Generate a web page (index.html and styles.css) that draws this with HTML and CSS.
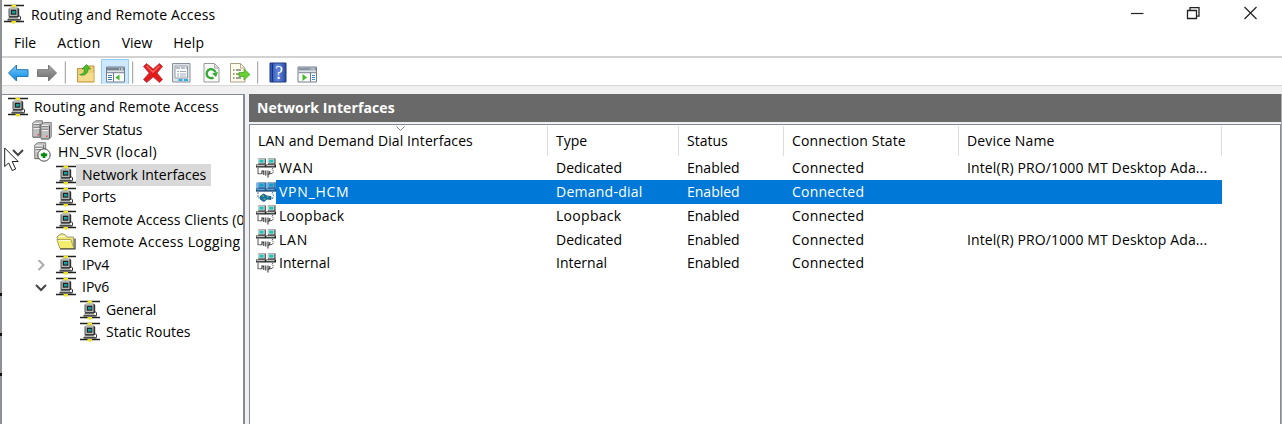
FILE: index.html
```html
<!DOCTYPE html>
<html lang="en">
<head>
<meta charset="utf-8">
<title>Routing and Remote Access</title>
<link rel="stylesheet" href="styles.css">
</head>
<body>
<svg class="defs" aria-hidden="true">
  <symbol id="router" viewBox="0 0 20 20">
    <path d="M0 1.500h20M0 17.500h20" stroke="#222" stroke-width="1.700"/>
    <path d="M7.500.8h4.500v1.600h-1.200v1.400H8.600V2.400H7.500zM7.500 17h4.500v1.500h-1.200v1.300H8.600v-1.300H7.500z" fill="#f1e811"/>
    <path d="M6 3.800h8l1.200 1.200v8H6z" fill="#333"/>
    <path d="M5 4.500l1-.8h7.500v9H5z" fill="#b5b9b7"/>
    <path d="M5 12.500V4.500" stroke="#555" stroke-width="1"/>
    <path d="M6.800 5.700h5.500v5H6.800z" fill="#222"/>
    <path d="M8 7h3.500v2.500H8z" fill="#12a09e"/>
    <path d="M4.500 13h9l2 2.500H3.500z" fill="#b2b5b3"/>
    <path d="M5 12.800h9M3.500 15.800h13" stroke="#222" stroke-width="1.200"/>
    <path d="M15.300 11.500l1.200 1.500v2.500" fill="none" stroke="#333"/>
  </symbol>
  <symbol id="servers" viewBox="0 0 20 20">
    <path d="M.7 3L4 .7h6.500v14l-2 2.500H.7z" fill="#c0c0c0" stroke="#707070" stroke-width=".8"/>
    <path d="M9 4.500l3-2h7.300v14l-2 2.500H9z" fill="#c0c0c0" stroke="#707070" stroke-width=".8"/>
    <path d="M8 4v12.500M17.500 5.500V18" stroke="#555" stroke-width="1.100"/>
    <path d="M1.500 3.500h6M1.500 6h6M1.500 8.500h6M9.800 5.500h6.500M9.800 8h6.500M9.800 10.500h6.500" stroke="#eee" stroke-width="1.200"/>
    <path d="M1.500 4.700h6M1.500 7.200h6M9.800 6.700h6.500M9.800 9.200h6.500M1 17.300h7.500M9.300 19h8" stroke="#666" stroke-width=".8"/>
    <path d="M5.500 14h1.500v1.500H5.500zM14 15.500h1.500V17H14z" fill="#e44"/>
  </symbol>
  <symbol id="server-up" viewBox="0 0 20 20">
    <path d="M2.700 3l3-2.300h8v13l-2 3h-9z" fill="#c6c6c6" stroke="#666" stroke-width=".8"/>
    <path d="M3.500 4h7M3.500 6.500h7M3.500 9h6" stroke="#fff"/><path d="M3.500 5.200h7M3.500 7.700h7M11.500 3v6M3 16.500h5" stroke="#666" stroke-width=".8"/>
    <circle cx="12" cy="13" r="6.200" fill="#fff" stroke="#333" stroke-width=".9"/>
    <path d="M12 10l1.400 1.600h1.800v2.600h-1.800V16h-2.800v-1.800H8.800v-2.600h1.800z" fill="#078a0d"/>
  </symbol>
  <symbol id="folder" viewBox="0 0 20 20">
    <path d="M1 5l2-2 3-1.500L9.500 3 11 5h6.500v11H4z" fill="#efe67e" stroke="#888560" stroke-width=".8"/>
    <path d="M.8 7.500h14L18 16.500H4z" fill="#f5ed70" stroke="#9d9747" stroke-width=".8"/>
    <path d="M4 17h15V6.500" fill="none" stroke="#333" stroke-width="1.200"/>
    <path d="M3 4.500h6M3 8.500h11" stroke="#fffde0"/>
  </symbol>
  <symbol id="pcs" viewBox="0 0 20 20">
    <path d="M2.300.5h7.500v6H2.300zM12 .5h7.500v6H12z" fill="#333"/>
    <path d="M1.800.5h7v5h-7zM11.500.5h7v5h-7z" fill="#c9cecc"/>
    <path d="M3.500 1.800h4v2.700h-4zM13.200 1.800h4v2.700h-4z" fill="#12c9be"/>
    <path d="M0 6.500h20v3H0z" fill="#222"/>
    <path d="M.5 7h8.300v1.200H.5zM10.300 7h8.300v1.200h-8.300z" fill="#bfc2c1"/>
  </symbol>
  <symbol id="network" viewBox="0 0 20 20">
    <use href="#pcs"/>
    <path d="M2 10v5.800h4" fill="none" stroke="#666" stroke-width="1.100"/>
    <path d="M17 10l-1 1.500 1.500 1.500-1 2.500H13.500" fill="none" stroke="#555" stroke-dasharray="1.600 .8"/>
    <path d="M6 16v-3h1.800v4M9.800 17.500v-5M12 12.500v7M12 16h1.800v-3" fill="none" stroke="#333" stroke-width="1.100"/>
  </symbol>
  <symbol id="dial" viewBox="0 0 20 20">
    <use href="#pcs"/>
    <path d="M0 .5h20v9H0z" fill="#0878d9" opacity=".5"/>
    <path d="M2 10v5.800h3M17 10l-1 1.500 1.500 1.500-1 4" fill="none" stroke="#437da9" stroke-dasharray="2 1"/>
    <path d="M4.500 14l3-2 3.500 2 4 .5v3l-4-.5-3 2.500-3.500-2z" fill="#0876a8" stroke="#164f79" stroke-width=".8"/>
    <path d="M6 14h2M7.500 17h2M11 15h1.500" stroke="#b2c252" stroke-width="1.200"/>
  </symbol>
</svg>
<div class="window">
  <header class="titlebar">
    <svg class="icon"><use href="#router"/></svg><span class="title">Routing and Remote Access</span>
    <svg class="controls" viewBox="0 0 130 20" fill="none" stroke="#222">
      <path d="M1 9.500h12.500" stroke-width="1.200"/>
      <path d="M57.500 6.500h9v8h-9zM60 6V3.700h9v8.500h-2.500" stroke-width="1.300"/>
      <path d="M114.500 3l12 12M126.500 3l-12 12" stroke-width="1.200"/>
    </svg>
  </header>
  <nav class="menu"><span>File</span><span class="action">Action</span><span>View</span><span class="help">Help</span></nav>
  <div class="toolbar">
    <svg viewBox="0 0 330 26" width="330" height="26">
      <defs>
        <linearGradient id="blue" x2="0" y2="1"><stop stop-color="#79c9fa"/><stop offset="1" stop-color="#078ae5"/></linearGradient>
        <linearGradient id="gray" x2="0" y2="1"><stop stop-color="#aaa"/><stop offset="1" stop-color="#6b6b6b"/></linearGradient>
        <linearGradient id="help" x2="1"><stop stop-color="#284fae"/><stop offset=".5" stop-color="#6385dc"/><stop offset="1" stop-color="#2749a2"/></linearGradient>
      </defs>
      <path d="M6.500 15l8-8v4.700H26v6.800H14.500V23z" fill="url(#blue)" stroke="#2478b3"/>
      <path d="M54.500 15l-8-8v4.700H35.500v6.800h11V23z" fill="url(#gray)" stroke="#777"/>
      <path d="M63.300 3.500v22M130.700 3.500v22M255.700 3.500v22" stroke="#999"/>
      <path d="M75.500 10.500h6l2-2.500H92v16H75.500z" fill="#edcf75" stroke="#bd9545"/><path d="M76.500 15h15v8h-15z" fill="#f5dc8d"/>
      <path d="M77.500 16.500c4 0 5-2.500 5-5.500h-2.500l4.500-4.500 4 4.500h-2.500c0 5-4 7.500-8.500 5.500z" fill="#4bbf25" stroke="#2e8c22" stroke-width=".7"/>
      <path d="M99.500 1.500h27v25h-27z" fill="#cce8ff" stroke="#91cdf7"/>
      <g transform="translate(104 8.500)"><path d="M.5.500h18v15H.5z" fill="#fafafa" stroke="#747f8c"/><path d="M1 1h17v3H1z" fill="#748394"/><path d="M1 6h17" stroke="#8d98a4" stroke-width="1.500"/><path d="M2 9h4M2 11h4M2 13h4" stroke="#3e75a2"/><path d="M7.500 6v9" stroke="#69798a"/><path d="M13.500 8v6L9.500 11z" fill="#43b927"/><path d="M13 2.500h1M15 2.500h2" stroke="#fff"/></g>
      <path d="M144.500 5.500l6.700 5.500 6.300-5.500 3 3-5.500 6.500 5.500 6.500-3 3-6.300-5.500-6.500 5.500-3.200-3 5.700-6.500-5.700-6.500z" fill="#e11b1b" stroke="#b9353a" stroke-width=".8"/><path d="M144.500 8l6.500 6 6.500-6" fill="none" stroke="#f86a61" stroke-width="1.300"/>
      <g transform="translate(170 5)"><path d="M.5.500h17.500v18.500H.5z" fill="#dfe3e7" stroke="#89929b"/><path d="M3 3h12.500v12H3z" fill="#fff" stroke="#8e99a4"/><path d="M4 5h11" stroke="#9ba8b6" stroke-width="1.500" stroke-dasharray="4 1"/><path d="M5 8.500h2M8 8.500h6M5 11h2M8 11h6M5 13h2M8 13h6" stroke="#9aabbb"/><path d="M6.500 17h4M12 17h4" stroke="#2daee6" stroke-width="2"/></g>
      <path d="M202 5.500h10.500L217 10v14h-15z" fill="#fafaf8" stroke="#999"/><path d="M212.500 6v4h4" fill="#ddd" stroke="#aaa"/><path d="M211.500 19.500a4.500 4.500 0 1 1 2-5" fill="none" stroke="#31a934" stroke-width="2.300"/><path d="M216 14l-2 5-4-3.500z" fill="#31a934"/>
      <path d="M228.500 5.500h10l4.500 4.500v14h-14.500z" fill="#fffbea" stroke="#aaa08a"/><path d="M238.500 6v4h4" fill="none" stroke="#b4aa91"/><path d="M231 12h1.500M234 12h5M231 16h1.500M234 16h4M231 20h1.500M234 20h5" stroke="#7c8279" stroke-width="1.300"/><path d="M237 14.500h5V11l6 5.500-6 5.500v-3.500h-5z" fill="#69cf37" stroke="#48a922" stroke-width=".8"/>
      <path d="M268 5h16v19h-16z" fill="url(#help)" stroke="#203b86"/><path d="M270.500 5v19" stroke="#17327c"/><text x="273" y="21" class="question">?</text>
      <g transform="translate(295.500 8.500)"><path d="M.5.500h18.500v15H.5z" fill="#fafafa" stroke="#747f8c"/><path d="M1 1h17.500v3H1z" fill="#8794a3"/><path d="M1 6h17.500" stroke="#8d98a4" stroke-width="1.500"/><path d="M13 6v9" stroke="#69798a"/><path d="M14.500 9h3M14.500 11h3M14.500 13h3" stroke="#3e8ccc"/><path d="M5 7.500v7l4.500-3.500z" fill="#43b927"/><path d="M13 2.500h1M15 2.500h2" stroke="#fff"/></g>
    </svg>
  </div>
  <main class="panes">
    <aside class="tree">
      <div class="node root"><svg class="icon"><use href="#router"/></svg><span class="t-root">Routing and Remote Access</span></div>
      <div class="node l1"><svg class="icon"><use href="#servers"/></svg><span class="t-status">Server Status</span></div>
      <div class="node l1"><svg class="chevron"><path d="M1 2l5 5 5-5"/></svg><svg class="icon"><use href="#server-up"/></svg><span class="t-host">HN_SVR (local)</span></div>
      <div class="node l2"><svg class="icon"><use href="#router"/></svg><span class="selected">Network Interfaces</span></div>
      <div class="node l2"><svg class="icon"><use href="#router"/></svg><span>Ports</span></div>
      <div class="node l2"><svg class="icon"><use href="#router"/></svg><span class="t-clients">Remote Access Clients (0</span></div>
      <div class="node l2"><svg class="icon"><use href="#folder"/></svg><span class="t-logging">Remote Access Logging</span></div>
      <div class="node l2"><svg class="chevron closed"><path d="M3.500 0l5 5-5 5"/></svg><svg class="icon"><use href="#router"/></svg><span>IPv4</span></div>
      <div class="node l2"><svg class="chevron"><path d="M1 2l5 5 5-5"/></svg><svg class="icon"><use href="#router"/></svg><span>IPv6</span></div>
      <div class="node l3"><svg class="icon"><use href="#router"/></svg><span class="t-general">General</span></div>
      <div class="node l3"><svg class="icon"><use href="#router"/></svg><span>Static Routes</span></div>
    </aside>
    <section class="details">
      <h1><span>Network Interfaces</span></h1>
      <div class="list">
        <div class="row head"><span class="sorted"><b class="c-head">LAN and Demand Dial Interfaces</b><svg class="sort"><path d="M.5.500l4 4 4-4"/></svg></span><span>Type</span><span>Status</span><span><b class="c-state">Connection State</b></span><span><b class="c-device">Device Name</b></span></div>
        <div class="row"><span class="name"><svg class="icon"><use href="#network"/></svg><em class="n-wan">WAN</em></span><span>Dedicated</span><span>Enabled</span><span><b class="c-connected">Connected</b></span><span><b class="c-intel">Intel(R) PRO/1000 MT Desktop Ada...</b></span></div>
        <div class="row active"><span class="name"><svg class="icon"><use href="#dial"/></svg><em class="n-vpn">VPN_HCM</em></span><span><b class="c-demand">Demand-dial</b></span><span>Enabled</span><span><b class="c-connected">Connected</b></span><span></span></div>
        <div class="row"><span class="name"><svg class="icon"><use href="#network"/></svg><em class="n-loop">Loopback</em></span><span><b class="n-loop">Loopback</b></span><span>Enabled</span><span><b class="c-connected">Connected</b></span><span></span></div>
        <div class="row"><span class="name"><svg class="icon"><use href="#network"/></svg><em class="n-lan">LAN</em></span><span>Dedicated</span><span>Enabled</span><span><b class="c-connected">Connected</b></span><span><b class="c-intel">Intel(R) PRO/1000 MT Desktop Ada...</b></span></div>
        <div class="row"><span class="name"><svg class="icon"><use href="#network"/></svg><em>Internal</em></span><span>Internal</span><span>Enabled</span><span><b class="c-connected">Connected</b></span><span></span></div>
      </div>
    </section>
  </main>
</div>
<i class="mark a"></i><i class="mark b"></i><i class="mark c"></i>
<svg class="cursor" viewBox="0 0 16 25"><path d="M.7 1v18.500l4-3.500 3.500 7.500 3.500-1.500-3.500-7.500h6z" fill="#fff" stroke="#222"/></svg>
</body>
</html>
```
FILE: styles.css
```css
* { box-sizing: border-box; }
body { margin: 0; width: 1282px; height: 424px; overflow: hidden; position: relative; background: #fff; color: #000; font: 14px/20px "Open Sans", "Noto Sans", sans-serif; }
.defs { position: absolute; width: 0; height: 0; }
.window { height: 424px; border-left: 2px solid #8f9294; display: flex; flex-direction: column; }
.icon { width: 20px; height: 20px; flex: none; }
.titlebar { height: 30px; display: flex; align-items: center; padding: 0 22px 2px 2px; }
.title { margin-left: 7px; padding-top: 2px; letter-spacing: .16px; }
.controls { width: 130px; height: 20px; margin-left: auto; }
.menu { height: 26px; display: flex; align-items: center; padding-left: 12px; gap: 21px; }
.action { letter-spacing: .4px; }
.help { letter-spacing: .2px; }
.toolbar { height: 30px; border-top: 2px solid #d2d2d2; border-bottom: 1px solid #d8d8d8; display: flex; }
.toolbar svg { display: block; flex: none; }
.question { fill: #fff; font: 18px "Liberation Serif", serif; }
.panes { flex: 1; min-height: 0; display: flex; gap: 4px; padding-top: 8px; background: #f0f0f0; }
.tree { width: 243px; flex: none; border: 1px solid #858b94; border-width: 1px 2px 0 0; background: #fff; overflow: hidden; padding-top: 1px; }
.node { height: 22.500px; display: flex; align-items: center; white-space: nowrap; position: relative; }
.node span { padding-left: 6px; line-height: 22px; }
.root { padding-left: 6px; }
.l1 { padding-left: 30px; }
.l2 { padding-left: 54px; }
.l3 { padding-left: 78px; }
.t-root { letter-spacing: .18px; }
.t-status { letter-spacing: -.15px; }
.t-host { letter-spacing: .4px; }
.t-clients { letter-spacing: .05px; }
.t-logging { letter-spacing: .3px; }
.t-general { letter-spacing: -.2px; }
.node .selected { background: #d9d9d9; padding: 0 5px 0 6px; }
.chevron { width: 12px; height: 11px; flex: none; margin: 2px 9px 0 -21px; fill: none; stroke: #444; stroke-width: 2; }
.l1 .chevron { margin: 2px 8px 0 -20px; }
.closed { stroke: #aaa; }
.details { flex: 1; min-width: 0; display: flex; flex-direction: column; border-right: 1px solid #a7abb0; }
h1 { margin: 0 0 2px; height: 28px; background: #696969; color: #fff; padding-left: 8px; font-size: 14px; line-height: 28px; font-weight: 700; letter-spacing: .1px; }
.list { flex: 1; background: #fff; border: 1px solid #858b94; border-width: 1px 1px 0; }
.row { height: 23.750px; display: grid; grid-template-columns: 298px 131px 105px 175px 263px; align-items: center; white-space: nowrap; }
.row > span { padding: 1px 0 0 8px; height: 100%; display: flex; align-items: center; position: relative; }
.row b, .row em { font: inherit; }
.row .name { padding: 0 0 0 6px; }
.name em { padding: 1px 0 0 3px; flex: 1; height: 100%; display: flex; align-items: center; }
.head { height: 31px; padding-top: 1px; }
.head > span { border-right: 1px solid #ddd; padding-top: 0; }
.row.head > span { padding-top: 0; }
.c-head { letter-spacing: .1px; }
.c-state { letter-spacing: .15px; }
.c-device { letter-spacing: .15px; }
.c-connected { letter-spacing: .2px; }
.c-demand { letter-spacing: .25px; }
.c-intel { letter-spacing: .12px; }
.row .n-wan, .row .n-lan { letter-spacing: .8px; }
.row .n-vpn { letter-spacing: .75px; }
.row .n-loop { letter-spacing: .3px; }
.sort { position: absolute; left: 146px; top: 0; width: 9px; height: 6px; fill: none; stroke: #888; }
.active em, .active > span:not(.name) { background: #0078d7; color: #fff; }
.mark { position: absolute; left: 0; width: 2px; height: 3px; background: #111; }
.a { top: 293px; }
.b { top: 333px; }
.c { top: 373px; }
.cursor { position: absolute; left: 4px; top: 147px; width: 16px; height: 25px; }
```
